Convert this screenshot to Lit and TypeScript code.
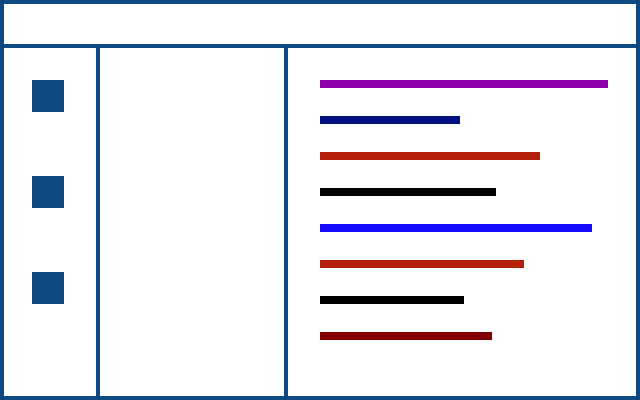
import { LitElement, html, css } from "lit";
import { customElement } from "lit/decorators.js";
import { styleMap } from "lit/directives/style-map.js";

interface Line {
  width: number;
  color: string;
}

// Widths are percentages of the editor's content width.
const LINES: Line[] = [
  { width: 100, color: "#8b00a8" },
  { width: 48.6, color: "#001080" },
  { width: 76.4, color: "#b5200d" },
  { width: 61.1, color: "#000000" },
  { width: 94.4, color: "#160dff" },
  { width: 70.8, color: "#b5200d" },
  { width: 50, color: "#000000" },
  { width: 59.7, color: "#800000" },
];

@customElement("app-root")
export class AppRoot extends LitElement {
  static styles = css`
    :host {
      --frame: #0f4a85;
      display: flex;
      flex-direction: column;
      box-sizing: border-box;
      min-height: 100vh;
      border: 4px solid var(--frame);
      background: #ffffff;
    }
    .title-bar {
      height: 40px;
      border-bottom: 4px solid var(--frame);
    }
    .workbench {
      flex: 1;
      display: grid;
      grid-template-columns: 96px 188px 1fr;
    }
    .activity-bar {
      display: flex;
      flex-direction: column;
      align-items: flex-start;
      gap: 64px;
      box-sizing: border-box;
      padding: 32px 28px;
      border-right: 4px solid var(--frame);
    }
    .action {
      width: 32px;
      height: 32px;
      background: var(--frame);
    }
    .side-bar {
      border-right: 4px solid var(--frame);
    }
    .editor {
      display: flex;
      flex-direction: column;
      gap: 28px;
      padding: 32px 28px 32px 32px;
    }
    .line {
      height: 8px;
    }
  `;

  render() {
    return html`
      <header class="title-bar"></header>
      <div class="workbench">
        <nav class="activity-bar">
          <div class="action"></div>
          <div class="action"></div>
          <div class="action"></div>
        </nav>
        <aside class="side-bar"></aside>
        <main class="editor">
          ${LINES.map(
            (line) => html`<div
              class="line"
              style=${styleMap({ width: `${line.width}%`, background: line.color })}
            ></div>`,
          )}
        </main>
      </div>
    `;
  }
}
